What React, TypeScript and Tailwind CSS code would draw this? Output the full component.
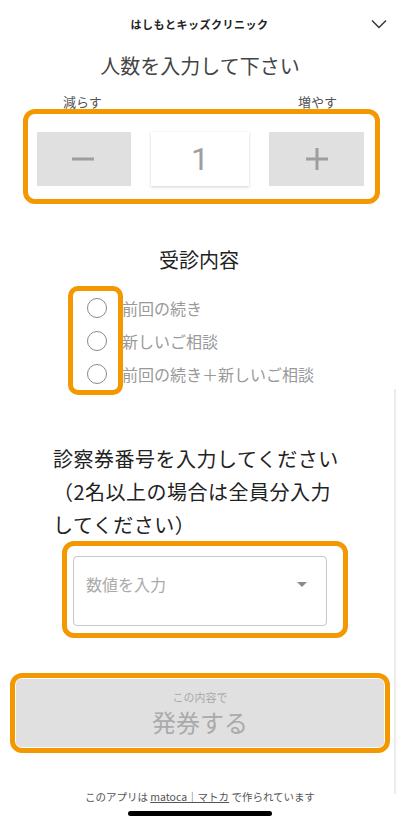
const jp = "font-['Noto_Sans_CJK_JP','Noto_Sans',sans-serif]";

const options = ["前回の続き", "新しいご相談", "前回の続き＋新しいご相談"];

export default function App() {
  return (
    <div className={`relative w-[400px] h-[825px] overflow-hidden bg-white ${jp}`}>
      {/* header */}
      <header className="h-[48px] flex items-center justify-between px-[12px]">
        <div className="w-[16px]" />
        <span className="text-[11px] font-bold text-[#222] tracking-[0.5px]">はしもとキッズクリニック</span>
        <svg width="16" height="10" viewBox="0 0 16 10" className="mr-[1px]">
          <polyline points="1,1.5 8,8.5 15,1.5" fill="none" stroke="#333" strokeWidth="1.4" />
        </svg>
      </header>

      <h2 className="mt-[4px] text-center text-[20px] leading-[28px] text-[#444]">人数を入力して下さい</h2>

      <div className="mt-[14px] flex justify-between px-[63px] text-[13px] leading-[16px] text-[#555]">
        <span>減らす</span>
        <span>増やす</span>
      </div>

      {/* counter */}
      <div className="ml-[23px] mt-[-1px] w-[357px] h-[95px] border-[5px] border-[#f39800] rounded-[12px] pl-[9px] pt-[18px] flex gap-[20px]">
        <button className="w-[94px] h-[54px] bg-[#e0e0e0] flex items-center justify-center">
          <svg width="24" height="4" viewBox="0 0 24 4">
            <rect x="0" y="0.5" width="22" height="3" fill="#9e9e9e" />
          </svg>
        </button>
        <div className="w-[98px] h-[54px] bg-white shadow-[0_1px_3px_rgba(0,0,0,0.18)] flex items-center justify-center font-['Roboto',sans-serif] text-[32px] text-[#9e9e9e]">
          1
        </div>
        <button className="w-[95px] h-[54px] bg-[#e0e0e0] flex items-center justify-center">
          <svg width="24" height="24" viewBox="0 0 24 24">
            <rect x="1" y="10.5" width="22" height="3" fill="#9e9e9e" />
            <rect x="10.5" y="1" width="3" height="22" fill="#9e9e9e" />
          </svg>
        </button>
      </div>

      <h3 className="mt-[42px] text-center text-[20px] leading-[28px] text-[#222] pr-[2px]">受診内容</h3>

      {/* radios */}
      <div className="mt-[12px] flex">
        <div className="ml-[68px] w-[55px] border-[5px] border-[#f39800] rounded-[10px]">
          {options.map((o) => (
            <div key={o} className="h-[33px] flex items-center pl-[14px]">
              <span className="w-[20px] h-[20px] rounded-full border-[1.5px] border-[#8a8a8a]" />
            </div>
          ))}
        </div>
        <div className="pt-[5px] ml-[-1px]">
          {options.map((o) => (
            <div key={o} className="h-[33px] flex items-center text-[16px] text-[#999]">
              {o}
            </div>
          ))}
        </div>
      </div>

      <p className="mt-[47px] ml-[53px] w-[300px] text-[20px] leading-[33px] text-[#222] tracking-[0.5px]">
        診察券番号を入力してください
        <br />
        （2名以上の場合は全員分入力
        <br />
        してください）
      </p>

      {/* ticket number select */}
      <div className="ml-[62px] w-[286px] h-[97px] border-[5px] border-[#f39800] rounded-[12px] pl-[6px] pt-[10px]">
        <div className="w-[254px] h-[70px] border border-[#c8c8c8] rounded-[4px] flex justify-between pl-[12px] pr-[19px] pt-[15px]">
          <span className="text-[16px] leading-[24px] text-[#aaa]">数値を入力</span>
          <svg width="10" height="6" viewBox="0 0 10 6" className="mt-[10px]">
            <polygon points="0,0 10,0 5,5" fill="#8a8a8a" />
          </svg>
        </div>
      </div>

      {/* submit */}
      <div className="ml-[10px] mt-[35px] w-[380px] h-[80px] border-[5px] border-[#f39800] rounded-[12px] p-[1px]">
        <button className="w-full h-full bg-[#e0e0e0] rounded-[5px] flex flex-col items-center justify-center text-[#aaa]">
          <span className="text-[11px] leading-[14px]">この内容で</span>
          <span className="mt-[3px] text-[24px] leading-[30px]">発券する</span>
        </button>
      </div>

      <p className="mt-[36px] text-center text-[10.5px] leading-[16px] text-[#555]">
        このアプリは <span className="underline">matoca｜マトカ</span> で作られています
      </p>

      <div className="mt-[6px] mx-auto w-[144px] h-[5px] rounded-full bg-black" />

      {/* scrollbar */}
      <div className="absolute left-[394px] top-[389px] w-[2px] h-[405px] bg-[#ececec]" />
    </div>
  );
}
